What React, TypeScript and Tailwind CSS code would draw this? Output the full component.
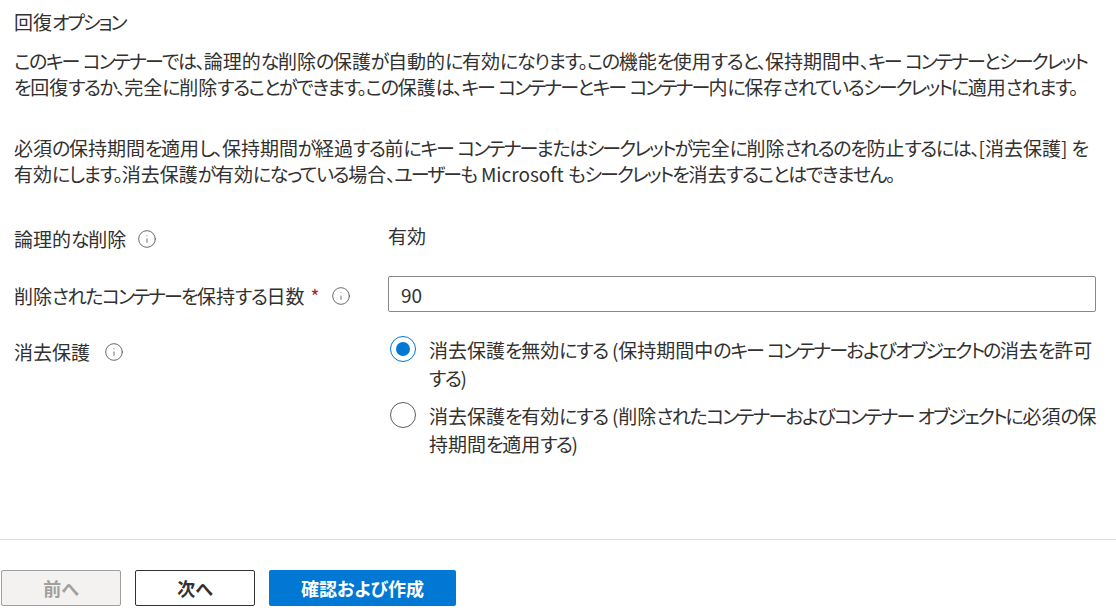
import { Info } from "lucide-react";

// Meiryo UI style: full kanji, tight kana
const Jp = ({ text }: { text: string }) => (
  <>
    {text.split(/([\u3040-\u309f、。]+|[\u30a0-\u30ff]+)/).map((part, i) =>
      /^[\u3040-\u309f、。]/.test(part) ? (
        <span key={i} className="tracking-[-1.4px]">{part}</span>
      ) : /^[\u30a0-\u30ff]/.test(part) ? (
        <span key={i} className="tracking-[-2px]">{part}</span>
      ) : (
        <span key={i}>{part}</span>
      )
    )}
  </>
);

const FieldLabel = ({ text, required, gap }: { text: string; required?: boolean; gap: string }) => (
  <div className="flex items-center text-[19px] leading-[26px]">
    <span><Jp text={text} /></span>
    {required && <span className="ml-[6px] text-[#a4262c]">*</span>}
    <Info className={`${gap} h-[20px] w-[20px] text-[#605e5c]`} strokeWidth={1.1} />
  </div>
);

const App = () => {
  return (
    <div className="relative h-[615px] w-[1116px] overflow-hidden bg-white text-[#323130] [font-feature-settings:'palt'] font-['Noto_Sans_CJK_JP','Noto_Sans',sans-serif]">
      <div className="pl-[14px] pr-[10px] pt-[9px]">
        {/* Header */}
        <h2 className="text-[19px] font-normal leading-[26px]"><Jp text="回復オプション" /></h2>

        <div className="mt-[13px] whitespace-nowrap text-[19px] leading-[26px]">
          <div><Jp text="このキー コンテナーでは、論理的な削除の保護が自動的に有効になります。この機能を使用すると、保持期間中、キー コンテナーとシークレット" /></div>
          <div><Jp text="を回復するか、完全に削除することができます。この保護は、キー コンテナーとキー コンテナー内に保存されているシークレットに適用されます。" /></div>
        </div>

        <div className="mt-[35px] whitespace-nowrap text-[19px] leading-[26px]">
          <div><Jp text="必須の保持期間を適用し、保持期間が経過する前にキー コンテナーまたはシークレットが完全に削除されるのを防止するには、[消去保護] を" /></div>
          <div><Jp text="有効にします。消去保護が有効になっている場合、ユーザーも Microsoft もシークレットを消去することはできません。" /></div>
        </div>

        {/* Fields */}
        <div className="mt-[36px] grid grid-cols-[374px_708px] items-start">
          <div className="pt-[3px]">
            <FieldLabel text="論理的な削除" gap="ml-[11px]" />
          </div>
          <div className="text-[19px] leading-[26px]"><Jp text="有効" /></div>

          <div className="mt-[27px] pt-[4px]">
            <FieldLabel text="削除されたコンテナーを保持する日数" required gap="ml-[12px]" />
          </div>
          <input
            readOnly
            value="90"
            className="mt-[24px] h-[36px] w-[708px] rounded-[2px] border border-[#8a8886] px-[12px] text-[19px] text-[#323130] outline-none"
          />

          <div className="mt-[26px] pt-[1px]">
            <FieldLabel text="消去保護" gap="ml-[14px]" />
          </div>
          <div className="mt-[24px] flex flex-col gap-[10px] pl-[2px]">
            <label className="flex items-start gap-[13px]">
              <span className="flex h-[26px] w-[26px] shrink-0 items-center justify-center rounded-full border border-[#0078d4]">
                <span className="h-[14px] w-[14px] rounded-full bg-[#0078d4]" />
              </span>
              <div className="whitespace-nowrap text-[19px] leading-[28px]">
                <div><Jp text="消去保護を無効にする (保持期間中のキー コンテナーおよびオブジェクトの消去を許可" /></div>
                <div><Jp text="する)" /></div>
              </div>
            </label>
            <label className="flex items-start gap-[13px]">
              <span className="h-[26px] w-[26px] shrink-0 rounded-full border border-[#605e5c]" />
              <div className="whitespace-nowrap text-[19px] leading-[28px]">
                <div><Jp text="消去保護を有効にする (削除されたコンテナーおよびコンテナー オブジェクトに必須の保" /></div>
                <div><Jp text="持期間を適用する)" /></div>
              </div>
            </label>
          </div>
        </div>
      </div>

      {/* Footer */}
      <div className="absolute bottom-0 left-0 right-0 h-[76px] border-t border-[#e1dfdd] pl-[1px] pt-[30px]">
        <div className="flex gap-[14px]">
          <button className="h-[36px] w-[120px] rounded-[2px] border border-[#a19f9d] bg-[#f3f2f1] text-[18px] font-bold text-[#a19f9d]">
            前へ
          </button>
          <button className="h-[36px] w-[120px] rounded-[2px] border border-[#323130] bg-white text-[18px] font-bold text-[#323130]">
            次へ
          </button>
          <button className="h-[36px] w-[187px] rounded-[2px] bg-[#0078d4] text-[18px] font-bold text-white">
            確認および作成
          </button>
        </div>
      </div>
    </div>
  );
};

export default App;
